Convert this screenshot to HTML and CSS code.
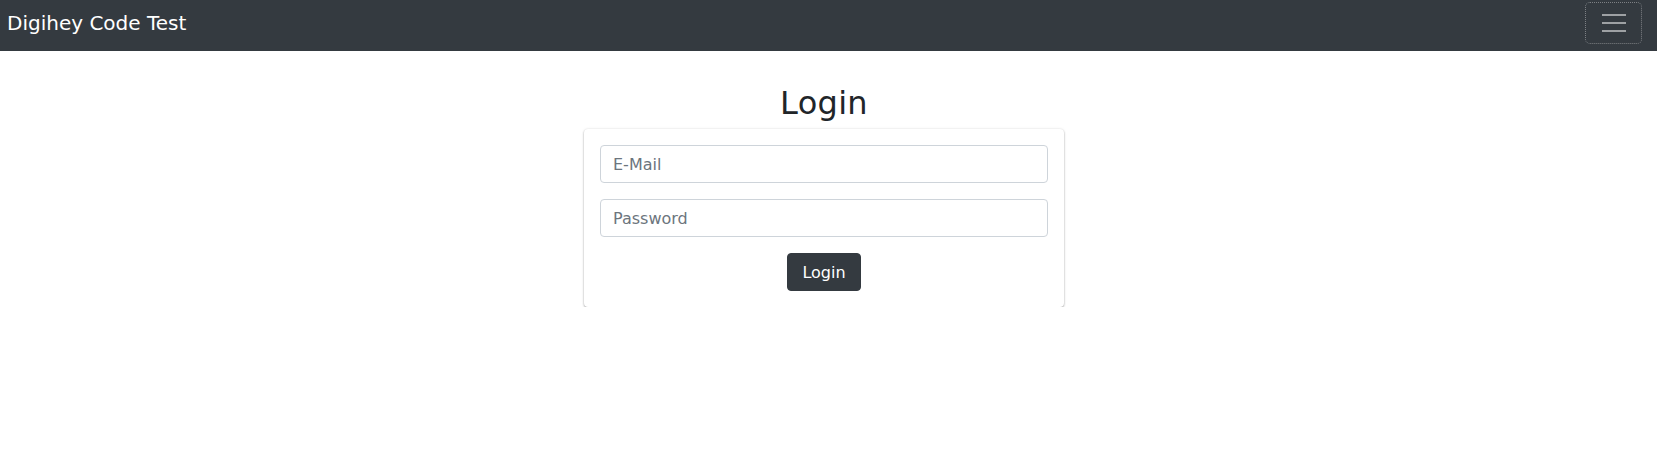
FILE: index.html
```html
<!DOCTYPE html>
<html lang="en">
<head>
<meta charset="utf-8">
<title>Digihey Code Test</title>
<link rel="stylesheet" href="styles.css">
</head>
<body>
<nav class="navbar">
  <a class="brand" href="#">Digihey Code Test</a>
  <button class="toggler" type="button" aria-label="Toggle navigation">
    <svg class="toggler-icon" width="24" height="18" viewBox="0 0 24 18">
      <rect x="0" y="0" width="24" height="2" fill="#9ea1a4"/>
      <rect x="0" y="8" width="24" height="2" fill="#9ea1a4"/>
      <rect x="0" y="16" width="24" height="2" fill="#9ea1a4"/>
    </svg>
  </button>
</nav>
<main class="main">
  <h2 class="title">Login</h2>
  <form class="card">
    <input class="field" type="email" placeholder="E-Mail">
    <input class="field" type="password" placeholder="Password">
    <div class="actions">
      <button class="btn" type="button">Login</button>
    </div>
  </form>
</main>
</body>
</html>
```

FILE: styles.css
```css
* { box-sizing: border-box; }

html, body {
  margin: 0;
  padding: 0;
  background: #fff;
  font-family: "DejaVu Sans", "Open Sans", sans-serif;
  color: #212529;
}

.navbar {
  height: 51px;
  background: #343a40;
  display: flex;
  align-items: center;
  justify-content: space-between;
  padding: 0 15px 5px 7px;
}

.brand {
  color: #fff;
  text-decoration: none;
  font-size: 20px;
  line-height: 30px;
}

.toggler {
  width: 57px;
  height: 42px;
  background: transparent;
  border: 1px dotted #7d8084;
  border-radius: 5px;
  display: flex;
  align-items: center;
  justify-content: center;
  padding: 0;
}

.toggler-icon { display: block; }

.main {
  display: flex;
  flex-direction: column;
  align-items: center;
  padding: 33px 9px 0 0;
}

.title {
  margin: 0 0 7px;
  font-size: 32px;
  font-weight: 400;
  line-height: 38px;
  letter-spacing: 0.3px;
}

.card {
  width: 480px;
  padding: 16px;
  background: #fff;
  border-radius: 4px;
  box-shadow: 0 1px 2px rgba(0,0,0,0.32), 0 0 3px rgba(0,0,0,0.1);
  display: flex;
  flex-direction: column;
  gap: 16px;
}

.field {
  display: block;
  width: 100%;
  height: 38px;
  padding: 6px 12px;
  font-family: inherit;
  font-size: 16px;
  color: #495057;
  background: #fff;
  border: 1px solid #ced4da;
  border-radius: 4px;
  outline: none;
}

.field::placeholder { color: #6c757d; opacity: 1; }

.actions {
  display: flex;
  justify-content: center;
}

.btn {
  height: 38px;
  padding: 0 14px;
  font-family: inherit;
  font-size: 16px;
  color: #fff;
  background: #343a40;
  border: 1px solid #343a40;
  border-radius: 4px;
}
```
